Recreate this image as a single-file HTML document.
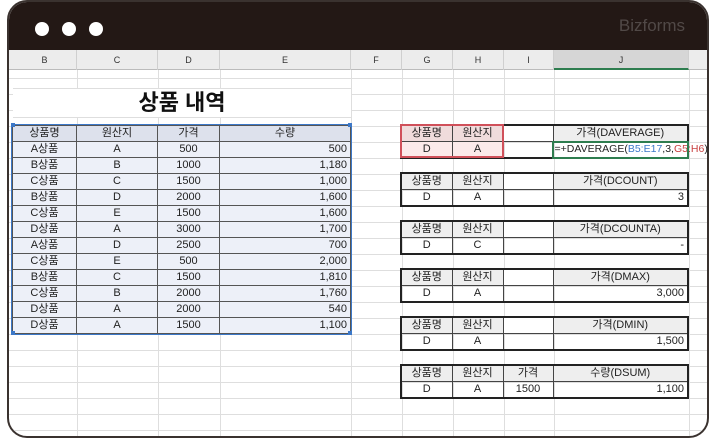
<!DOCTYPE html>
<html><head><meta charset="utf-8"><style>
*{margin:0;padding:0;box-sizing:border-box}
body{width:715px;height:440px;background:#fff;position:relative;overflow:hidden;font-family:"Liberation Sans","Noto Sans CJK KR",sans-serif;font-size:11px;color:#222}
.win{position:absolute;left:7px;top:0;width:702px;height:438px;border:2px solid #3a322f;border-radius:20px;overflow:hidden;background:#fff}
.hdr{position:absolute;left:0;top:0;width:100%;height:48px;background:#231815}
.dot{position:absolute;top:20px;width:14px;height:14px;border-radius:50%;background:#fff}
.logo{position:absolute;right:22px;top:14px;color:#514947;font-size:17px}
.colh{position:absolute;top:48px;left:0;width:100%;height:20px;background:#ececec;border-bottom:1px solid #bbb}
.colh div{position:absolute;top:0;height:20px;line-height:20px;text-align:center;font-size:9px;color:#333;border-right:1px solid #cfcfcf}
.grid{position:absolute;left:0;top:68px;width:100%;height:380px;background-image:repeating-linear-gradient(to bottom,transparent 0,transparent 8px,#dedede 8px,#dedede 9px,transparent 9px,transparent 16px)}
.vl{position:absolute;top:68px;width:1px;height:380px;background:#dedede}
table{position:absolute;border-collapse:collapse;table-layout:fixed}
td{height:16px;padding:0 3px;text-align:center;white-space:nowrap;font-size:11px;line-height:15px}
.L td{border:1px solid #555;background:#edf0f8}
.L tr:first-child td{background:#dde1ec}
.L{outline:1.5px solid #3c78c8}
.R td{border:1px solid #444}
.R tr:first-child td{background:#eeeeee}
.R{border:2px solid #222}
.r{text-align:right!important}
.hd{position:absolute;width:4px;height:4px;background:#3c78c8}
</style></head><body>
<div class="win">
<div class="hdr"><div class="dot" style="left:26px"></div><div class="dot" style="left:53px"></div><div class="dot" style="left:80px"></div><div class="logo">Bizforms</div></div>
<div class="grid"></div>
<div class="vl" style="left:68px"></div><div class="vl" style="left:149px"></div><div class="vl" style="left:211px"></div><div class="vl" style="left:342px"></div><div class="vl" style="left:393px"></div><div class="vl" style="left:444px"></div><div class="vl" style="left:495px"></div><div class="vl" style="left:545px"></div><div class="vl" style="left:680px"></div>
<div class="colh">
<div style="left:4px;width:64px">B</div><div style="left:68px;width:81px">C</div><div style="left:149px;width:62px">D</div><div style="left:211px;width:131px">E</div><div style="left:342px;width:51px">F</div><div style="left:393px;width:51px">G</div><div style="left:444px;width:51px">H</div><div style="left:495px;width:50px">I</div><div style="left:545px;width:135px;background:#d6d6d6;border-bottom:2px solid #2e7d4f">J</div>
</div>
<div style="position:absolute;left:4px;top:86px;width:338px;height:30px;background:#fff;border-bottom:1px solid #dedede;border-top:1px solid #dedede;text-align:center;font-size:22px;font-weight:bold;line-height:28px;color:#111">상품 내역</div>
</div>

<table class="L" style="left:12px;top:125px;width:338px">
<col style="width:64px"><col style="width:81px"><col style="width:62px"><col style="width:131px">
<tr><td>상품명</td><td>원산지</td><td>가격</td><td>수량</td></tr>
<tr><td>A상품</td><td>A</td><td>500</td><td class="r">500</td></tr>
<tr><td>B상품</td><td>B</td><td>1000</td><td class="r">1,180</td></tr>
<tr><td>C상품</td><td>C</td><td>1500</td><td class="r">1,000</td></tr>
<tr><td>B상품</td><td>D</td><td>2000</td><td class="r">1,600</td></tr>
<tr><td>C상품</td><td>E</td><td>1500</td><td class="r">1,600</td></tr>
<tr><td>D상품</td><td>A</td><td>3000</td><td class="r">1,700</td></tr>
<tr><td>A상품</td><td>D</td><td>2500</td><td class="r">700</td></tr>
<tr><td>C상품</td><td>E</td><td>500</td><td class="r">2,000</td></tr>
<tr><td>B상품</td><td>C</td><td>1500</td><td class="r">1,810</td></tr>
<tr><td>C상품</td><td>B</td><td>2000</td><td class="r">1,760</td></tr>
<tr><td>D상품</td><td>A</td><td>2000</td><td class="r">540</td></tr>
<tr><td>D상품</td><td>A</td><td>1500</td><td class="r">1,100</td></tr>
</table>
<div class="hd" style="left:11px;top:123px"></div><div class="hd" style="left:348px;top:123px"></div><div class="hd" style="left:11px;top:331px"></div><div class="hd" style="left:348px;top:331px"></div>

<table class="R" style="left:400px;top:124px;width:289px">
<col style="width:51px"><col style="width:51px"><col style="width:50px"><col style="width:135px">
<tr><td style="background:#f0dcdc">상품명</td><td style="background:#f0dcdc">원산지</td><td style="background:#fff"></td><td>가격(DAVERAGE)</td></tr>
<tr><td style="background:#fbeaea">D</td><td style="background:#fbeaea">A</td><td></td><td style="text-align:left;padding:0 1px;outline:2px solid #2e7d4f;outline-offset:-1px;font-size:10.5px">=+DAVERAGE(<span style="color:#3c78c8">B5:E17</span>,3,<span style="color:#c84040">G5:H6</span>)</td></tr>
</table>
<div style="position:absolute;left:400px;top:124px;width:104px;height:34px;border:2px solid #d0505a"></div>

<table class="R" style="left:400px;top:172px;width:289px">
<col style="width:51px"><col style="width:51px"><col style="width:50px"><col style="width:135px">
<tr><td>상품명</td><td>원산지</td><td style="background:#fff"></td><td>가격(DCOUNT)</td></tr>
<tr><td>D</td><td>A</td><td></td><td class="r">3</td></tr></table>

<table class="R" style="left:400px;top:220px;width:289px">
<col style="width:51px"><col style="width:51px"><col style="width:50px"><col style="width:135px">
<tr><td>상품명</td><td>원산지</td><td style="background:#fff"></td><td>가격(DCOUNTA)</td></tr>
<tr><td>D</td><td>C</td><td></td><td class="r">-</td></tr></table>

<table class="R" style="left:400px;top:268px;width:289px">
<col style="width:51px"><col style="width:51px"><col style="width:50px"><col style="width:135px">
<tr><td>상품명</td><td>원산지</td><td style="background:#fff"></td><td>가격(DMAX)</td></tr>
<tr><td>D</td><td>A</td><td></td><td class="r">3,000</td></tr></table>

<table class="R" style="left:400px;top:316px;width:289px">
<col style="width:51px"><col style="width:51px"><col style="width:50px"><col style="width:135px">
<tr><td>상품명</td><td>원산지</td><td style="background:#fff"></td><td>가격(DMIN)</td></tr>
<tr><td>D</td><td>A</td><td></td><td class="r">1,500</td></tr></table>

<table class="R" style="left:400px;top:364px;width:289px">
<col style="width:51px"><col style="width:51px"><col style="width:50px"><col style="width:135px">
<tr><td>상품명</td><td>원산지</td><td>가격</td><td>수량(DSUM)</td></tr>
<tr><td>D</td><td>A</td><td>1500</td><td class="r">1,100</td></tr></table>
</body></html>
